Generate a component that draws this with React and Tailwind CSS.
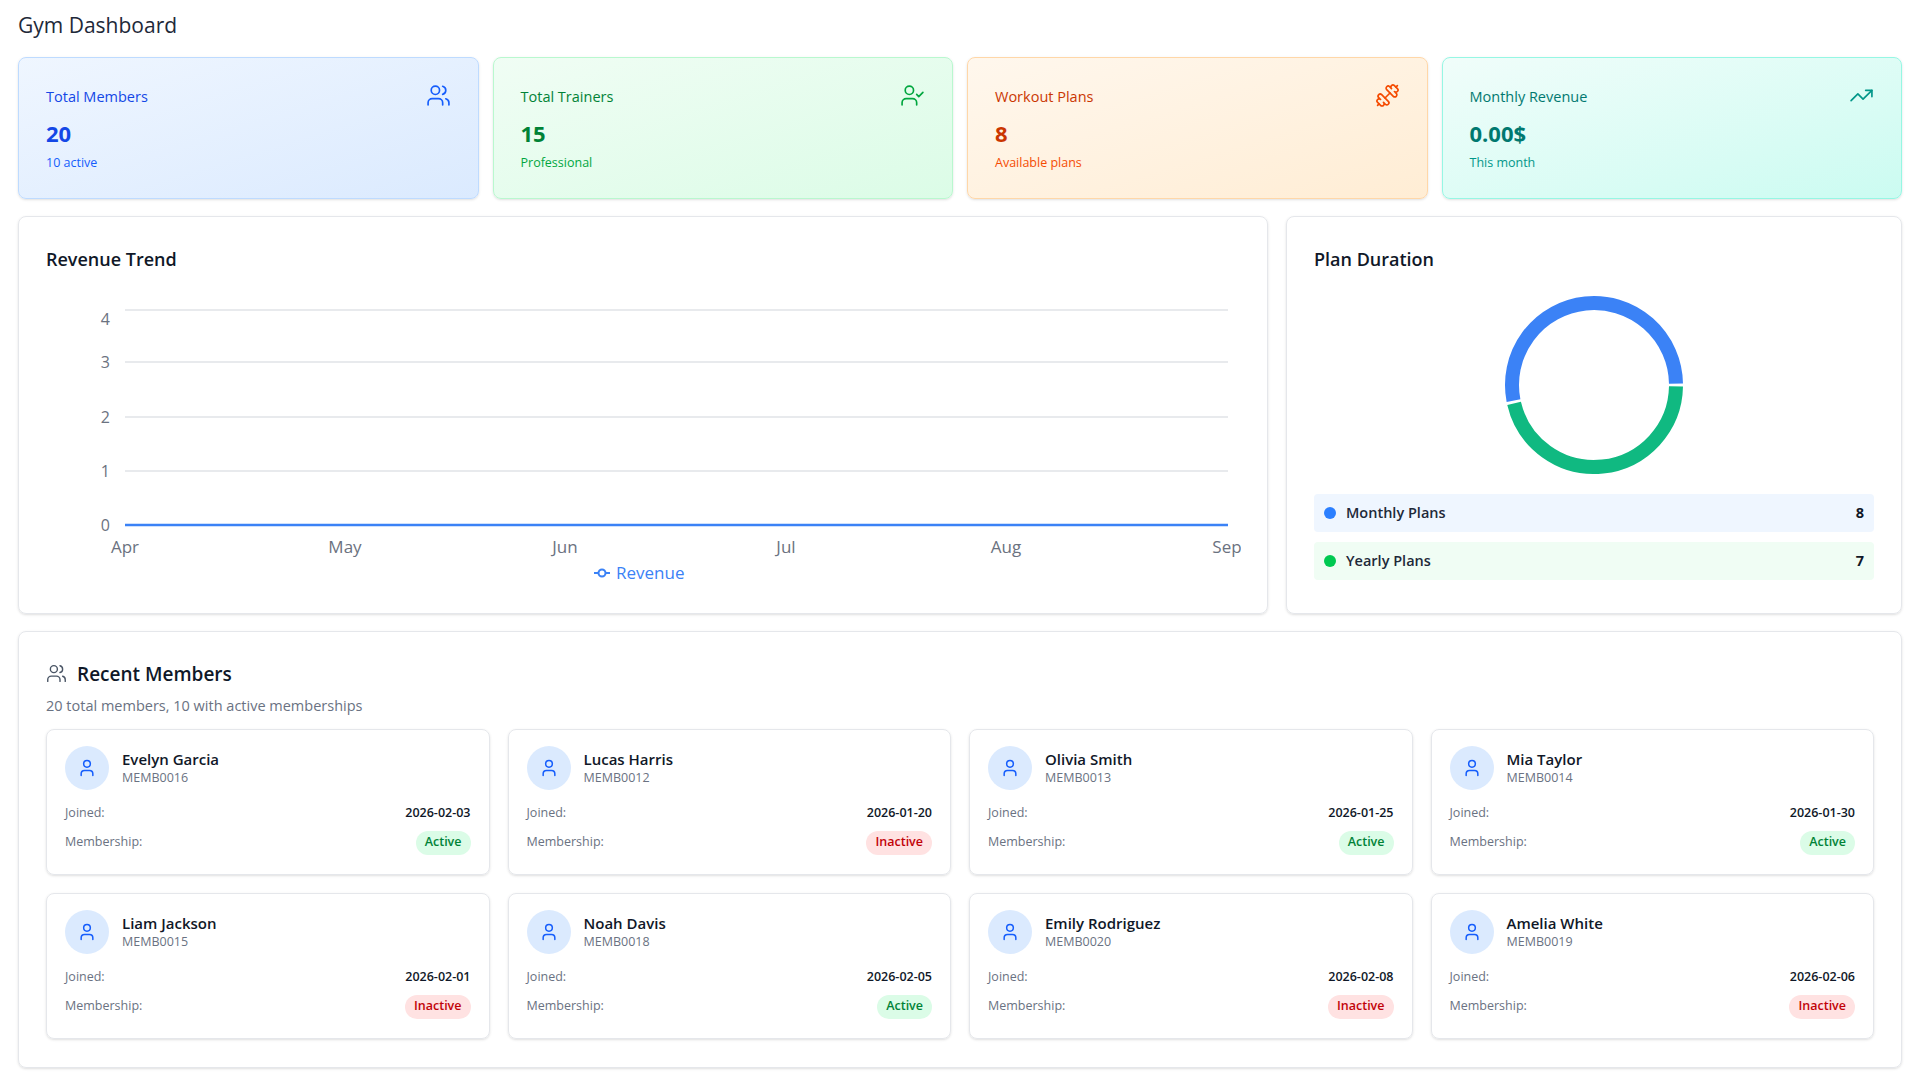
import React from "react";
import { Users, UserCheck, Dumbbell, TrendingUp, User } from "lucide-react";

const stats = [
  { title: "Total Members", value: "20", sub: "10 active", Icon: Users, box: "from-blue-50 to-blue-100 border-blue-200", tt: "text-blue-700", val: "text-blue-700", st: "text-blue-600", ic: "text-blue-600" },
  { title: "Total Trainers", value: "15", sub: "Professional", Icon: UserCheck, box: "from-green-50 to-green-100 border-green-200", tt: "text-green-700", val: "text-green-700", st: "text-green-600", ic: "text-green-600" },
  { title: "Workout Plans", value: "8", sub: "Available plans", Icon: Dumbbell, box: "from-orange-50 to-orange-100 border-orange-200", tt: "text-orange-700", val: "text-orange-700", st: "text-orange-600", ic: "text-orange-600" },
  { title: "Monthly Revenue", value: "0.00$", sub: "This month", Icon: TrendingUp, box: "from-teal-50 to-teal-100 border-teal-200", tt: "text-teal-700", val: "text-teal-700", st: "text-teal-600", ic: "text-teal-600" },
];

const members = [
  ["Evelyn Garcia", "MEMB0016", "2026-02-03", true],
  ["Lucas Harris", "MEMB0012", "2026-01-20", false],
  ["Olivia Smith", "MEMB0013", "2026-01-25", true],
  ["Mia Taylor", "MEMB0014", "2026-01-30", true],
  ["Liam Jackson", "MEMB0015", "2026-02-01", false],
  ["Noah Davis", "MEMB0018", "2026-02-05", true],
  ["Emily Rodriguez", "MEMB0020", "2026-02-08", false],
  ["Amelia White", "MEMB0019", "2026-02-06", false],
];

const months = ["Apr", "May", "Jun", "Jul", "Aug", "Sep"];
const monthX = [79, 299, 519, 740, 960, 1181];
const gridY = [15, 67, 122, 176, 230];

function RevenueChart() {
  return (
    <svg width="1195" height="300" className="block">
      {gridY.map((y, i) => (
        <g key={y}>
          <line x1="79" x2="1182" y1={y} y2={y} stroke="#d1d5db" strokeWidth="1" />
          <text x="64" y={i === 0 ? 30 : y + 6} textAnchor="end" fontSize="16" fill="#6b7280">{4 - i}</text>
        </g>
      ))}
      <line x1="79" x2="1182" y1="230" y2="230" stroke="#3b82f6" strokeWidth="2.5" />
      {months.map((m, i) => (
        <text key={m} x={monthX[i]} y="258" textAnchor="middle" fontSize="17" fill="#6b7280">{m}</text>
      ))}
      <line x1="548" x2="564" y1="278" y2="278" stroke="#3b82f6" strokeWidth="2" />
      <circle cx="556" cy="278" r="3.5" fill="#fff" stroke="#3b82f6" strokeWidth="2" />
      <text x="570" y="284" fontSize="17" fill="#3b82f6">Revenue</text>
    </svg>
  );
}

function arc(cx, cy, r, a0, a1) {
  const p = (a) => [cx + r * Math.cos((a * Math.PI) / 180), cy - r * Math.sin((a * Math.PI) / 180)];
  const [x0, y0] = p(a0);
  const [x1, y1] = p(a1);
  const large = a1 - a0 > 180 ? 1 : 0;
  return `M ${x0} ${y0} A ${r} ${r} 0 ${large} 0 ${x1} ${y1}`;
}

function Donut() {
  return (
    <svg width="190" height="190" className="block">
      <path d={arc(95, 95, 82, 1, 191)} fill="none" stroke="#3b82f6" strokeWidth="14" />
      <path d={arc(95, 95, 82, 193, 359)} fill="none" stroke="#10b981" strokeWidth="14" />
    </svg>
  );
}

export default function App() {
  return (
    <div className="min-h-screen bg-white p-[18px] pt-[10px] text-gray-900" style={{ fontFamily: "'Open Sans', 'Noto Sans', sans-serif" }}>
      <h1 className="text-[21px] text-gray-800 mb-[15px]">Gym Dashboard</h1>

      <div className="grid grid-cols-4 gap-[14px]">
        {stats.map((s) => (
          <div key={s.title} className={`h-[142px] rounded-lg border bg-gradient-to-br ${s.box} px-[27px] pt-[25px] shadow-sm`}>
            <div className="flex items-start justify-between">
              <div className={`text-[14.5px] font-medium mt-[3px] ${s.tt}`}>{s.title}</div>
              <s.Icon className={`w-[25px] h-[25px] ${s.ic}`} strokeWidth={1.6} />
            </div>
            <div className={`text-[22px] font-bold mt-[9px] ${s.val}`}>{s.value}</div>
            <div className={`text-[12.5px] mt-[4px] ${s.st}`}>{s.sub}</div>
          </div>
        ))}
      </div>

      <div className="grid grid-cols-3 gap-[18px] mt-[17px]">
        <div className="col-span-2 h-[398px] rounded-lg border border-gray-200 shadow-sm px-[27px] pt-[29px]">
          <h2 className="text-[18px] font-semibold text-gray-900">Revenue Trend</h2>
          <div className="mt-[22px]">
            <RevenueChart />
          </div>
        </div>
        <div className="h-[398px] rounded-lg border border-gray-200 shadow-sm px-[27px] pt-[29px]">
          <h2 className="text-[18px] font-semibold text-gray-900">Plan Duration</h2>
          <div className="flex justify-center mt-[17px]">
            <Donut />
          </div>
          <div className="mt-[14px] flex flex-col gap-[10px]">
            <div className="flex items-center justify-between h-[38px] rounded bg-blue-50 px-[10px]">
              <div className="flex items-center gap-[10px]">
                <span className="w-[12px] h-[12px] rounded-full bg-blue-500" />
                <span className="text-[14.5px] font-semibold text-gray-800">Monthly Plans</span>
              </div>
              <span className="text-[14.5px] font-bold">8</span>
            </div>
            <div className="flex items-center justify-between h-[38px] rounded bg-green-50 px-[10px]">
              <div className="flex items-center gap-[10px]">
                <span className="w-[12px] h-[12px] rounded-full bg-green-500" />
                <span className="text-[14.5px] font-semibold text-gray-800">Yearly Plans</span>
              </div>
              <span className="text-[14.5px] font-bold">7</span>
            </div>
          </div>
        </div>
      </div>

      <div className="mt-[17px] rounded-lg border border-gray-200 shadow-sm px-[27px] pt-[28px] pb-[28px]">
        <div className="flex items-center gap-[10px]">
          <Users className="w-[21px] h-[21px] text-gray-600" strokeWidth={1.6} />
          <h2 className="text-[19px] font-semibold">Recent Members</h2>
        </div>
        <p className="text-[14.5px] text-gray-500 mt-[7px]">20 total members, 10 with active memberships</p>
        <div className="grid grid-cols-4 gap-[18px] mt-[12px]">
          {members.map(([name, id, date, active]) => (
            <div key={id} className="h-[146px] rounded-lg border border-gray-200 shadow-sm px-[18px] pt-[16px]">
              <div className="flex items-center gap-[13px]">
                <div className="w-[44px] h-[44px] rounded-full bg-blue-100 flex items-center justify-center">
                  <User className="w-[20px] h-[20px] text-blue-600" strokeWidth={1.8} />
                </div>
                <div>
                  <div className="text-[15px] font-semibold text-gray-900 leading-[20px]">{name}</div>
                  <div className="text-[12.5px] text-gray-500 leading-[18px]">{id}</div>
                </div>
              </div>
              <div className="flex items-center justify-between mt-[14px] text-[12.5px]">
                <span className="text-gray-500">Joined:</span>
                <span className="font-semibold text-gray-900">{date}</span>
              </div>
              <div className="flex items-center justify-between mt-[8px] text-[12.5px]">
                <span className="text-gray-500">Membership:</span>
                <span className={`rounded-full px-[9px] h-[24px] flex items-center font-semibold ${active ? "bg-green-100 text-green-700" : "bg-red-100 text-red-700"}`}>
                  {active ? "Active" : "Inactive"}
                </span>
              </div>
            </div>
          ))}
        </div>
      </div>
    </div>
  );
}
